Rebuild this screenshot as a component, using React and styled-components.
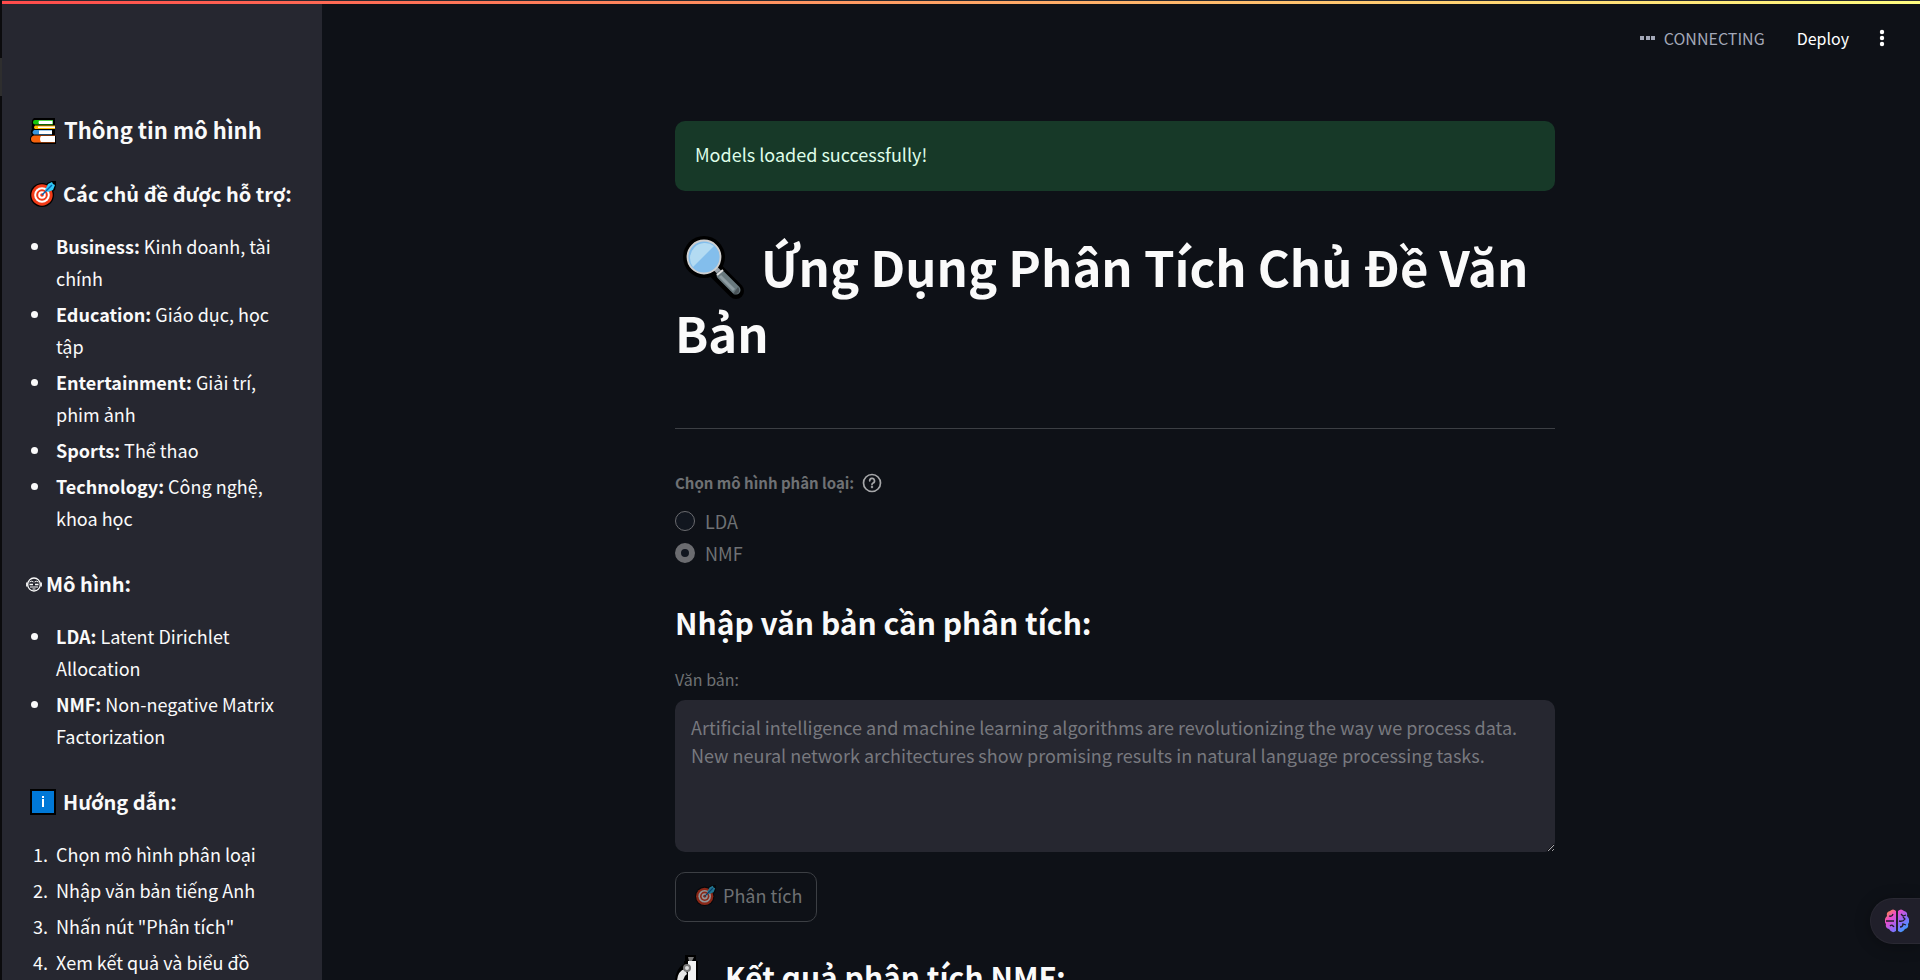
import React from "react";
import styled, { createGlobalStyle } from "styled-components";

const GlobalStyle = createGlobalStyle`
  * { box-sizing: border-box; }
  body {
    margin: 0;
    background: #0e1117;
    color: #fafafa;
    font-family: "Noto Sans CJK JP", "Noto Sans", sans-serif;
    font-size: 18px;
    line-height: 32px;
  }
`;

const Shell = styled.div`
  display: flex;
  height: 100vh;
  border-left: 2px solid #0b0b0d;
  overflow: hidden;
`;

const Decoration = styled.div`
  position: fixed;
  top: 0;
  left: 2px;
  right: 0;
  height: 4px;
  border-top: 1px solid #2b2a30;
  background: linear-gradient(90deg, #ff4b4b, #fffd80);
`;

const EdgeMark = styled.div`
  position: fixed;
  top: 58px;
  left: 0;
  width: 2px;
  height: 38px;
  background: #2e2e2e;
`;

const Sidebar = styled.aside`
  flex: 0 0 320px;
  padding: 114px 30px 0 28px;
  background: #262730;
  overflow-y: auto;
  scrollbar-width: none;
`;

const SideTitle = styled.h2`
  display: flex;
  align-items: center;
  gap: 8px;
  margin: 0 0 36px;
  font-size: 22px;
  line-height: 30px;
  font-weight: 600;
  white-space: nowrap;

  svg { margin-top: 4px; }
`;

const SideHeading = styled.h3`
  display: flex;
  align-items: center;
  gap: ${(p) => (p.$tight ? "4px" : "7px")};
  margin: 0 -10px 22px ${(p) => (p.$tight ? "-4px" : "0")};
  font-size: 20px;
  line-height: 28px;
  font-weight: 600;
  white-space: nowrap;
`;

const List = styled.ul`
  margin: 0 0 36px;
  padding: 0 0 0 22px;

  li { margin: 0 0 4px; padding-left: 4px; }
`;

const Main = styled.main`
  flex: 1;
  min-width: 0;
  padding-right: 12px;
  overflow-y: auto;
  scrollbar-width: none;
`;

const Toolbar = styled.header`
  display: flex;
  align-items: center;
  justify-content: flex-end;
  height: 76px;
  padding: 0 16px 0 20px;
`;

const Status = styled.span`
  display: flex;
  align-items: center;
  gap: 9px;
  margin-right: 32px;
  color: #a3a8b8;
  font-size: 16px;
  line-height: 24px;
`;

const ToolButton = styled.button`
  display: flex;
  align-items: center;
  padding: 0;
  margin-right: ${(p) => (p.$spaced ? "23px" : "0")};
  border: 0;
  background: none;
  color: #fff;
  font: inherit;
  font-size: 16px;
  line-height: 24px;
`;

const Content = styled.div`
  max-width: 880px;
  margin: 0 auto;
  padding: 45px 0 80px;
`;

const Alert = styled.div`
  padding: 17px 20px 21px;
  border-radius: 10px;
  background: #173928;
  color: #dffde9;
`;

const Title = styled.h1`
  margin: 42px 0 63px;
  font-size: 49px;
  line-height: 66px;
  font-weight: 700;

  svg { margin: 0 16px 0 8px; vertical-align: -12px; }
`;

const Rule = styled.hr`
  margin: 0 0 42px;
  border: 0;
  border-top: 1px solid #3c3f44;
`;

const RadioSet = styled.fieldset`
  margin: 0 0 31px;
  padding: 0;
  border: 0;
`;

const Legend = styled.legend`
  display: flex;
  align-items: center;
  gap: 8px;
  padding: 0;
  margin-bottom: 10px;
  color: #6f7174;
  font-size: 15px;
  line-height: 24px;
  font-weight: 600;
`;

const Option = styled.label`
  display: flex;
  align-items: center;
  gap: 10px;
  color: #6f7174;
`;

const Radio = styled.input`
  appearance: none;
  width: 20px;
  height: 20px;
  margin: 0;
  border: 1px solid #6b6c70;
  border-radius: 50%;
  background: #11161f;

  &:checked { border: 6px solid #6b6c70; background: #11161f; }
`;

const Subheading = styled.h2`
  display: flex;
  align-items: center;
  gap: 18px;
  margin: ${(p) => p.$top || "0"} 0 23px;
  font-size: 30px;
  line-height: 44px;
  font-weight: 600;
`;

const FieldLabel = styled.label`
  display: block;
  margin-bottom: 9px;
  color: #6f7174;
  font-size: 16px;
  line-height: 24px;
`;

const TextArea = styled.textarea`
  display: block;
  width: 100%;
  height: 152px;
  padding: 13px 16px;
  border: 0;
  border-radius: 10px;
  background: #262730;
  color: #78797f;
  font: inherit;
  line-height: 28px;
  resize: vertical;
`;

const Analyze = styled.button`
  display: flex;
  align-items: center;
  gap: 7px;
  height: 50px;
  margin-top: 20px;
  padding: 0 14px 4px 19px;
  border: 1px solid #3c3f44;
  border-radius: 10px;
  background: none;
  color: #6f7174;
  font: inherit;

  svg { opacity: 0.55; }
`;

const Assistant = styled.button`
  position: fixed;
  right: 0;
  bottom: 36px;
  display: flex;
  align-items: center;
  width: 50px;
  height: 46px;
  padding: 0 0 0 14px;
  border: 1px solid #2a2933;
  border-right: 0;
  border-radius: 23px 0 0 23px;
  background: #201f2a;
  box-shadow: 0 2px 16px rgba(0, 0, 0, 0.3);
`;

const Target = ({ size }) => (
  <svg width={size} height={size} viewBox="0 0 26 26" aria-hidden="true">
    <circle cx="12" cy="14" r="12" fill="#000" />
    <path d="M15 10 17 2 22 0h4v4l-1 5-9 5z" fill="#000" />
    <circle cx="12" cy="14" r="10.7" fill="#f03a17" />
    <circle cx="12" cy="14" r="7.8" fill="#fff" />
    <circle cx="12" cy="14" r="5.8" fill="#f03a17" />
    <circle cx="12" cy="14" r="3.8" fill="#fff" />
    <circle cx="12" cy="14" r="1.8" fill="#f03a17" />
    <path d="M15 9 18 3l4-2 1 2 2 1-2 5-5 2z" fill="#32c8f4" />
    <path d="M12 14 22 4" stroke="#0063b1" strokeWidth="1.4" />
  </svg>
);

const Books = () => (
  <svg width="26" height="26" viewBox="0 0 26 26" aria-hidden="true">
    <path d="M4 0h21v18h1v8H4q-4-1-4-5 0-3 2-4-2-3 0-6-1-2 0-4Q1 2 4 0z" fill="#000" />
    <path d="M5 2h18v4.500H5q-2 0-2-2.200T5 2z" fill="#16c60c" />
    <path d="M9 2.800h13.500v3.200H9q-1-1.600 0-3.200z" fill="#fff" />
    <path d="M5 7.500h20v3.500H5q-2-1.700 0-3.500z" fill="#ffb900" />
    <path d="M8 8.500h17v1.500H8z" fill="#fff" />
    <path d="M4 12h18v4.500H4q-3-2 0-4.500z" fill="#3a96dd" />
    <path d="M9 12.500h13v3.500H9z" fill="#fff" />
    <path d="M4 17.500h21v7H4q-3-.5-3-3.500t3-3.500z" fill="#f7630c" />
    <path d="M11 18h14v6H11q-2-3 0-6z" fill="#fff" />
  </svg>
);

const Face = () => (
  <svg width="16" height="15" viewBox="0 0 16 15" fill="none" stroke="#fafafa" aria-hidden="true">
    <ellipse cx="8" cy="7.500" rx="6.300" ry="6.500" strokeWidth="1.300" />
    <path d="M.8 5.500v4M15.200 5.500v4" strokeWidth="1.400" />
    <path d="M3.500 5Q5.500 3.500 7.500 5M8.500 5q2-1.500 4 0" />
    <path d="M3.500 7.500h3.500M9 7.500h3.500" strokeWidth="1.600" />
    <path d="M4 10h8M6.500 12h3" strokeWidth="1.100" />
  </svg>
);

const Info = () => (
  <svg width="26" height="26" viewBox="0 0 26 26" aria-hidden="true">
    <path d="M0 0h26v26H0z" fill="#000" />
    <path d="M2 2h22v22H2z" fill="#0078d7" />
    <path d="M12 7h2v2h-2zM12 10h2v8h-2z" fill="#fff" />
  </svg>
);

const Magnifier = () => (
  <svg width="62" height="63" viewBox="0 0 62 63" aria-hidden="true">
    <circle cx="21" cy="21" r="21" fill="#000" />
    <path d="m33 35 20 20" stroke="#000" strokeWidth="16" strokeLinecap="round" />
    <path d="m32 32 7 7" stroke="#9aa2a8" strokeWidth="5" />
    <path d="m38 39 15 15" stroke="#69797e" strokeWidth="9" strokeLinecap="round" />
    <path d="m37 40 14 14" stroke="#8e9ca2" strokeWidth="3" />
    <path d="m55 51-5 7q4 1 6-2 1-3-1-5z" fill="#4a5459" />
    <path d="m34 39 6-5" stroke="#ddd" strokeWidth="2" />
    <circle cx="21" cy="21" r="16.500" fill="#83beec" stroke="#cfcfcf" strokeWidth="1.800" />
    <path d="M10 31 31 10A15 15 0 0 0 10 31z" fill="#b3dbf2" />
  </svg>
);

const Microscope = () => (
  <svg width="32" height="44" viewBox="0 0 32 44" aria-hidden="true">
    <path d="M10 1h11v6h2v24h-9v12H4Q0 37 0 28 0 15 9 10V7h1z" fill="#000" />
    <path d="M13 3h6l-2 4h-3z" fill="#777" />
    <path d="M13 7h8v24h-8z" fill="#f2f2f2" />
    <path d="M10 15Q2 17 2 29l5 12h7l-6-9q-1-9 4-12z" fill="#e6e6e6" />
    <circle cx="12" cy="14" r="3" fill="#ddd" stroke="#777" strokeWidth="2" />
  </svg>
);

const Help = () => (
  <svg width="20" height="20" viewBox="0 0 20 20" fill="none" stroke="#a6a7a9" strokeWidth="1.700" strokeLinecap="round" aria-hidden="true">
    <circle cx="10" cy="10" r="8.500" />
    <path d="M7.700 7.800a2.400 2.400 0 1 1 3.400 2.200c-.8.400-1.100.8-1.100 1.600" />
    <circle cx="10" cy="14" r=".4" />
  </svg>
);

const Brain = () => (
  <svg width="24" height="24" viewBox="0 0 24 24" aria-hidden="true">
    <defs>
      <linearGradient id="brain" x1="0" y1="0" x2="1" y2="1">
        <stop offset="0" stopColor="#ffa116" />
        <stop offset=".3" stopColor="#ef4bcb" />
        <stop offset=".62" stopColor="#8c6bfa" />
        <stop offset="1" stopColor="#16b5ff" />
      </linearGradient>
    </defs>
    <path d="M11 2Q8-1 5 2 1 3 2 7-2 11 1 15q-1 4 3 5 3 5 7 2zM13 2q3-3 6 0 4 1 3 5 4 4 1 8 1 4-3 5-3 5-7 2z" fill="url(#brain)" />
    <path d="M4 7q3 1 4-2M1 12h8M5 17q2-2 4 1M14 12q4 1 6-2l-2-2M16 5l2 2 3-1M15 18q3 0 3-3l3 1" fill="none" stroke="#201f2a" strokeWidth="1.300" />
  </svg>
);

const topics = [
  ["Business:", "Kinh doanh, tài chính"],
  ["Education:", "Giáo dục, học tập"],
  ["Entertainment:", "Giải trí, phim ảnh"],
  ["Sports:", "Thể thao"],
  ["Technology:", "Công nghệ, khoa học"],
];

const models = [
  ["LDA:", "Latent Dirichlet Allocation"],
  ["NMF:", "Non-negative Matrix Factorization"],
];

const steps = ["Chọn mô hình phân loại", "Nhập văn bản tiếng Anh", 'Nhấn nút "Phân tích"', "Xem kết quả và biểu đồ"];

const sample =
  "Artificial intelligence and machine learning algorithms are revolutionizing the way we process data.\nNew neural network architectures show promising results in natural language processing tasks.";

const TermList = ({ items }) => (
  <List>
    {items.map(([term, text]) => (
      <li key={term}>
        <strong>{term}</strong> {text}
      </li>
    ))}
  </List>
);

export default function App() {
  return (
    <>
      <GlobalStyle />
      <Shell>
        <Sidebar>
          <SideTitle><Books />Thông tin mô hình</SideTitle>
          <SideHeading><Target size={26} />Các chủ đề được hỗ trợ:</SideHeading>
          <TermList items={topics} />
          <SideHeading $tight><Face />Mô hình:</SideHeading>
          <TermList items={models} />
          <SideHeading><Info />Hướng dẫn:</SideHeading>
          <List as="ol">
            {steps.map((step) => <li key={step}>{step}</li>)}
          </List>
        </Sidebar>
        <Main>
          <Toolbar>
            <Status>
              <svg width="15" height="4" viewBox="0 0 15 4" fill="#a3a8b8" aria-hidden="true">
                <path d="M0 0h4v4H0zM6 0h4v4H6zM11 0h4v4h-4z" />
              </svg>
              CONNECTING
            </Status>
            <ToolButton $spaced>Deploy</ToolButton>
            <ToolButton aria-label="Menu">
              <svg width="20" height="20" viewBox="0 0 20 20" fill="#fff" aria-hidden="true">
                <circle cx="10" cy="4" r="2.200" /><circle cx="10" cy="10" r="2.200" /><circle cx="10" cy="16" r="2.200" />
              </svg>
            </ToolButton>
          </Toolbar>
          <Content>
            <Alert role="alert">Models loaded successfully!</Alert>
            <Title><Magnifier />Ứng Dụng Phân Tích Chủ Đề Văn Bản</Title>
            <Rule />
            <RadioSet>
              <Legend>Chọn mô hình phân loại: <Help /></Legend>
              <Option><Radio type="radio" name="model" />LDA</Option>
              <Option><Radio type="radio" name="model" defaultChecked />NMF</Option>
            </RadioSet>
            <Subheading>Nhập văn bản cần phân tích:</Subheading>
            <FieldLabel htmlFor="text">Văn bản:</FieldLabel>
            <TextArea id="text" defaultValue={sample} />
            <Analyze><Target size={21} />Phân tích</Analyze>
            <Subheading $top="32px"><Microscope />Kết quả phân tích NMF:</Subheading>
          </Content>
        </Main>
      </Shell>
      <Decoration />
      <EdgeMark />
      <Assistant aria-label="Assistant"><Brain /></Assistant>
    </>
  );
}
